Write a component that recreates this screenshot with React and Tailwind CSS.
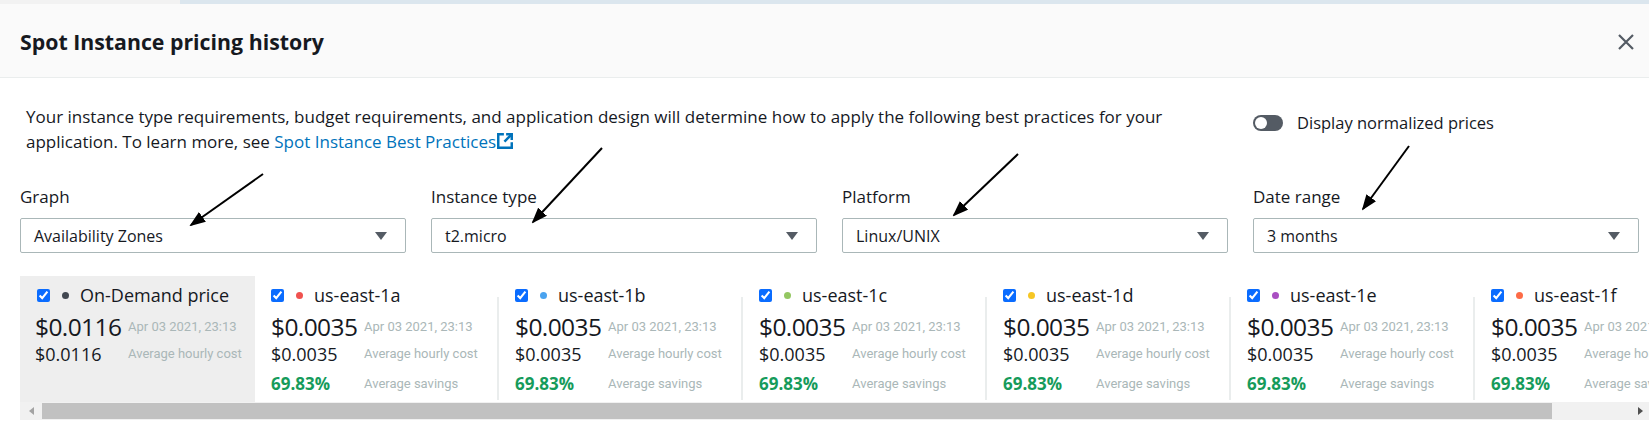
import React from "react";

const zones = [
    { name: "us-east-1a", color: "#f0524f" },
    { name: "us-east-1b", color: "#4aa3ef" },
    { name: "us-east-1c", color: "#94c762" },
    { name: "us-east-1d", color: "#f6c624" },
    { name: "us-east-1e", color: "#a94fc2" },
    { name: "us-east-1f", color: "#fd6b46" },
];

const selects = [
    { label: "Graph", value: "Availability Zones" },
    { label: "Instance type", value: "t2.micro" },
    { label: "Platform", value: "Linux/UNIX" },
    { label: "Date range", value: "3 months" },
];

// annotation arrows drawn over the form (tail -> head)
const arrows = [
    [263, 174, 191, 225],
    [602, 148, 533, 222],
    [1018, 154, 954, 215],
    [1409, 146, 1363, 209],
];

const Caret = () => (
    <svg width="12" height="8" viewBox="0 0 12 8">
        <path d="M0 0h12L6 8z" fill="#545b64" />
    </svg>
);

const ExternalIcon = () => (
    <svg width="18" height="18" viewBox="0 0 16 16" className="inline-block align-[-2px]" fill="none" stroke="#0073bb" strokeWidth="2.2">
        <path d="M7 2H2v12h12V9" />
        <path d="M9 2h5v5" />
        <path d="M14 2L7.5 8.5" />
    </svg>
);

const CardHeader = ({ name, color }) => (
    <div className="flex items-center h-6">
        <input type="checkbox" defaultChecked className="w-[13px] h-[13px] m-0 accent-[#0a6cff]" />
        <span className="ml-[12px] w-[7px] h-[7px] rounded-full" style={{ backgroundColor: color }} />
        <span className="ml-[11px] text-[18px] leading-6 text-[#16191f]">{name}</span>
    </div>
);

const Hint = ({ children }) => (
    <span className="font-['Roboto',sans-serif] text-[13px] text-[#aab7b8] whitespace-nowrap">{children}</span>
);

const Rows = ({ price, avg, savings }) => (
    <>
        <div className="mt-[3px] h-[34px] grid grid-cols-[93px_1fr] items-center">
            <span className="text-[24.5px] leading-[34px] tracking-[-0.6px] text-[#16191f]">{price}</span>
            <Hint>Apr 03 2021, 23:13</Hint>
        </div>
        <div className="h-5 grid grid-cols-[93px_1fr] items-center">
            <span className="text-[18px] leading-5 text-[#16191f]">{avg}</span>
            <Hint>Average hourly cost</Hint>
        </div>
        {savings && (
            <div className="mt-[10px] h-5 grid grid-cols-[93px_1fr] items-center">
                <span className="text-[17px] leading-5 font-bold text-[#169b5b]">{savings}</span>
                <Hint>Average savings</Hint>
            </div>
        )}
    </>
);

export default function App() {
    return (
        <div className="relative w-[1649px] h-[429px] overflow-hidden bg-white font-['Open_Sans',sans-serif] text-[#16191f]">
            {/* page behind the modal */}
            <div className="h-[4px] flex">
                <div className="w-[180px] bg-[#f2f2f2]" />
                <div className="flex-1 bg-[#dbe6ee]" />
            </div>

            {/* Header */}
            <div className="h-[74px] bg-[#fafafa] border-b border-[#eaeded] flex items-center justify-between pl-5 pr-[14px] pt-[2px]">
                <h2 className="text-[21.3px] font-bold">Spot Instance pricing history</h2>
                <svg width="16" height="16" viewBox="0 0 16 16" stroke="#545b64" strokeWidth="2.2" className="mr-[1px]">
                    <path d="M1 1l14 14M15 1L1 15" />
                </svg>
            </div>

            {/* Body */}
            <div className="pl-5 pt-[26px]">
                <div className="grid grid-cols-[repeat(4,386px)] gap-x-[25px]">
                    <p className="col-span-3 ml-[6px] text-[17px] leading-[25px] whitespace-nowrap">
                        Your instance type requirements, budget requirements, and application design will determine how to apply the following best practices for your
                        <br />
                        application. To learn more, see{" "}
                        <span className="text-[#0073bb]">Spot Instance Best Practices</span>
                        <ExternalIcon />
                    </p>
                    <div className="mt-[7px] flex items-center h-6">
                        <span className="w-[30px] h-4 rounded-full bg-[#545b64] flex items-center pl-[2px]">
                            <span className="w-3 h-3 rounded-full bg-white" />
                        </span>
                        <span className="ml-[14px] text-[16.5px]">Display normalized prices</span>
                    </div>
                </div>

                <div className="mt-[32px] grid grid-cols-[repeat(4,386px)] gap-x-[25px]">
                    {selects.map((s) => (
                        <div key={s.label}>
                            <div className="text-[17px] leading-[22px] mb-[10px]">{s.label}</div>
                            <div className="h-[35px] border border-[#aab7b8] rounded-[2px] flex items-center justify-between pl-[13px] pr-[18px]">
                                <span className="text-[16px]">{s.value}</span>
                                <Caret />
                            </div>
                        </div>
                    ))}
                </div>

                {/* Price cards */}
                <div className="mt-[23px] flex overflow-hidden">
                    <div className="w-[235px] shrink-0 bg-[#eeeeee] pl-[15px] pt-[7px] pb-2">
                        <div className="pl-[2px]">
                            <CardHeader name="On-Demand price" color="#414750" />
                        </div>
                        <Rows price="$0.0116" avg="$0.0116" />
                    </div>
                    {zones.map((z, i) => (
                        <div key={z.name} className={`flex shrink-0 ${i === 0 ? "w-[242px]" : "w-[244px]"}`}>
                            {i > 0 && <div className="w-[2px] mt-[21px] mb-[2px] bg-[#eaeded]" />}
                            <div className="flex-1 pl-4 pt-[7px] pb-2">
                                <CardHeader name={z.name} color={z.color} />
                                <Rows price="$0.0035" avg="$0.0035" savings="69.83%" />
                            </div>
                        </div>
                    ))}
                </div>

                {/* Horizontal scrollbar */}
                <div className="h-[18px] flex items-stretch bg-[#f1f1f1]">
                    <div className="w-[22px] flex items-center justify-center">
                        <svg width="5" height="8" viewBox="0 0 5 8"><path d="M5 0v8L0 4z" fill="#a3a3a3" /></svg>
                    </div>
                    <div className="w-[1510px] bg-[#c1c1c1] my-[1px]" />
                    <div className="flex-1" />
                    <div className="w-[18px] flex items-center justify-center">
                        <svg width="5" height="8" viewBox="0 0 5 8"><path d="M0 0v8l5-4z" fill="#505050" /></svg>
                    </div>
                </div>
            </div>

            {/* Annotation arrows */}
            <svg className="absolute inset-0 pointer-events-none" width="1649" height="429">
                <defs>
                    <marker id="head" markerWidth="16" markerHeight="12" refX="14" refY="6" orient="auto" markerUnits="userSpaceOnUse">
                        <path d="M0 0L16 6L0 12z" fill="#000" />
                    </marker>
                </defs>
                {arrows.map(([x1, y1, x2, y2], i) => (
                    <line key={i} x1={x1} y1={y1} x2={x2} y2={y2} stroke="#000" strokeWidth="2" markerEnd="url(#head)" />
                ))}
            </svg>
        </div>
    );
}
